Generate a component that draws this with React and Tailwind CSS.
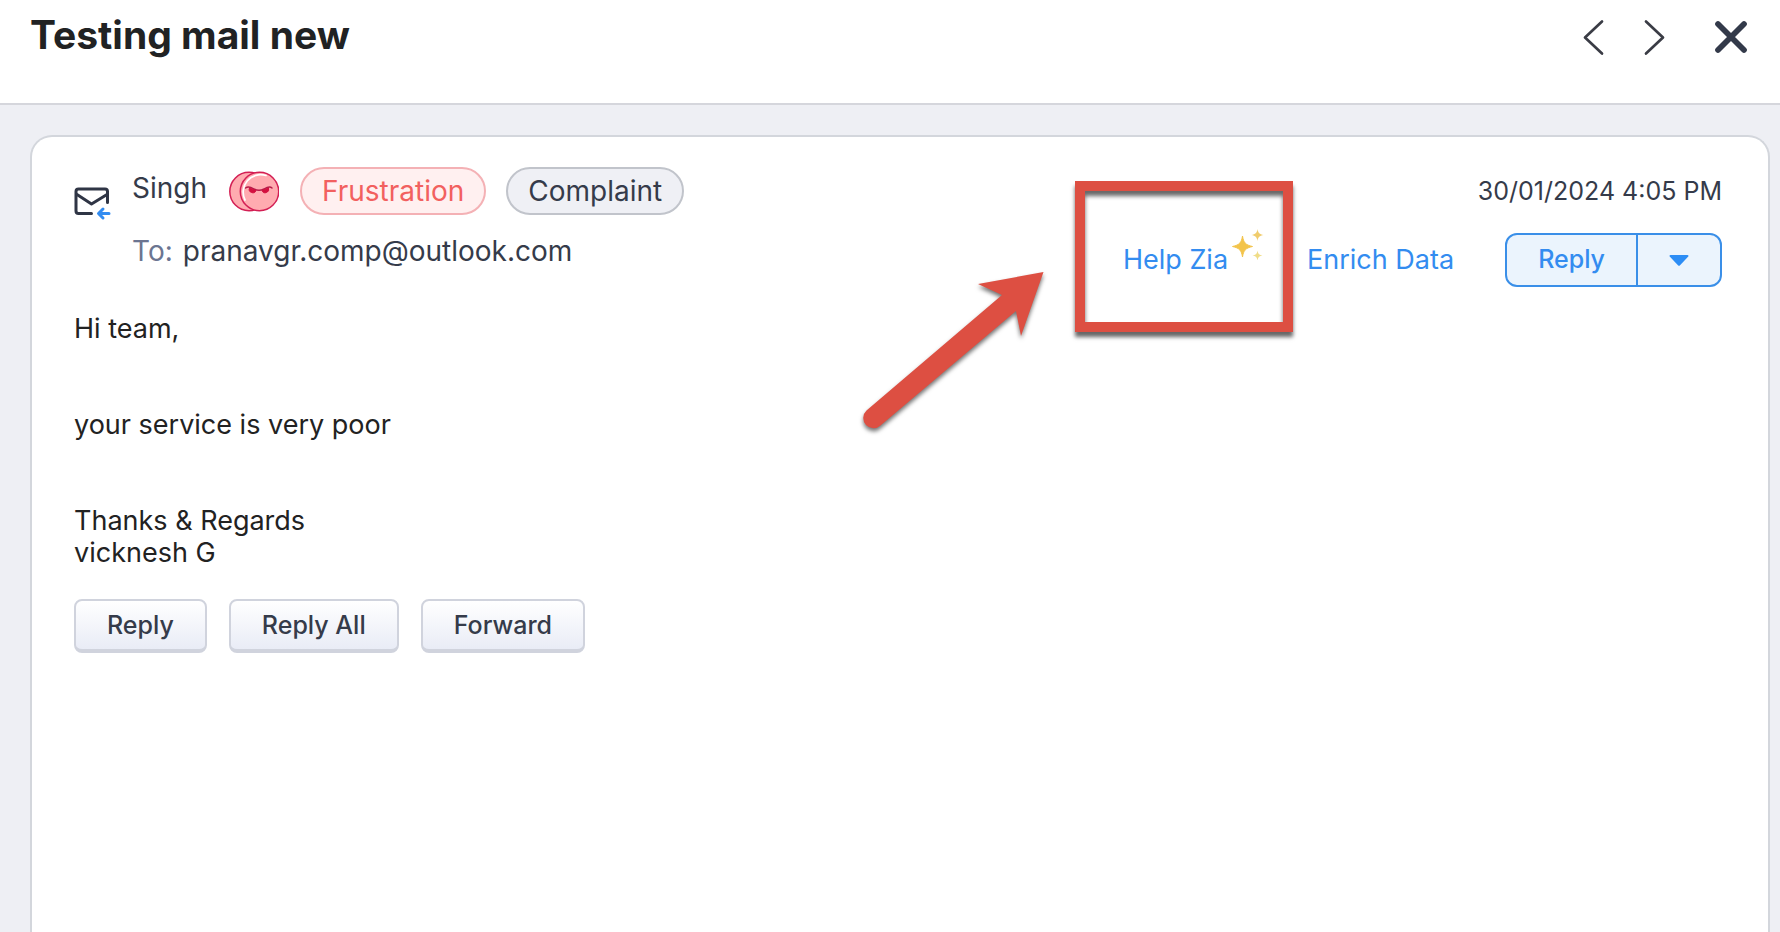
import { useState } from "react";

const mail = {
  subject: "Testing mail new",
  from: "Singh",
  to: "pranavgr.comp@outlook.com",
  date: "30/01/2024 4:05 PM",
  lines: ["Hi team,", "", "", "your service is very poor", "", "", "Thanks & Regards", "vicknesh G"],
};

function MailIcon() {
  return (
    <svg width="38" height="34" viewBox="0 0 38 34" fill="none" strokeLinecap="round" strokeLinejoin="round">
      <path d="M17.500 26.500H4.500a2.500 2.500 0 0 1-2.500-2.500V4.500A2.500 2.500 0 0 1 4.500 2h26.500a2.500 2.500 0 0 1 2.500 2.500V15.500" stroke="#2f3545" strokeWidth="3" />
      <path d="M3 7.500l14.500 9.500L33 7.500" stroke="#2f3545" strokeWidth="3" />
      <path d="M35 26.500H25M29 22l-4.500 4.500 4.500 4.500" stroke="#338cf0" strokeWidth="3" />
    </svg>
  );
}

function AngryFace() {
  return (
    <svg width="50" height="42" viewBox="0 0 50 42" fill="none">
      <circle cx="20" cy="20.500" r="19.200" fill="#ffabb0" stroke="#d31f54" strokeWidth="1.500" />
      <circle cx="30.500" cy="20.500" r="19.200" fill="#ffabb0" stroke="#d31f54" strokeWidth="1.500" />
      <path d="M16 29A17.500 17.500 0 0 1 37 4.500" stroke="#fff" strokeWidth="1.700" strokeLinecap="round" />
      <path d="M16.500 17c3-2.500 6-.5 8.500 1 3 1.500 7 1.500 10 0 2.500-1.500 5.500-3.500 8-1" stroke="#b51c4a" strokeWidth="1.400" strokeLinecap="round" />
      <path d="M20.500 17l6.500 2.500a3.300 3.300 0 1 1-6.500-2.500zM39.500 17L33 19.500a3.300 3.300 0 1 0 6.500-2.500z" fill="#d3103f" stroke="#d3103f" />
    </svg>
  );
}

function Sparkles() {
  return (
    <svg width="32" height="32" viewBox="0 0 32 32" className="-mt-8">
      <path d="M10.500 8c1 6.500 3 9 10 10.500-7 1.500-9 4-10 10.500-1-6.500-3-9-10-10.500 7-1.500 9-4 10-10.500z" fill="#f3c44b" stroke="#f3c44b" strokeLinejoin="round" />
      <path d="M25.500 1c.7 4 2 5.300 6 6-4 .7-5.300 2-6 6-.7-4-2-5.300-6-6 4-.7 5.300-2 6-6z" fill="#f0cc6c" />
      <path d="M25.500 22.500c.6 3.500 1.800 4.500 5 5-3.200.6-4.400 1.600-5 5-.6-3.400-1.800-4.400-5-5 3.200-.5 4.400-1.500 5-5z" fill="#f0dd88" />
    </svg>
  );
}

// red frame and arrow that lie over the Help Zia link
function Highlight() {
  return (
    <>
      <div className="pointer-events-none absolute -left-12 -top-[52px] h-[151px] w-[218px] border-[10px] border-[#dd4f42] shadow-[0_5px_4px_rgba(0,0,0,0.6),inset_0_5px_4px_rgba(0,0,0,0.6)]" />
      <svg
        className="pointer-events-none absolute -left-[263px] top-[33px] drop-shadow-[0_3px_2px_rgba(0,0,0,0.55)]"
        width="190"
        height="170"
        viewBox="0 0 190 170"
      >
        <path d="M183.500 6L118 18l24 11L6.500 144.500a10 10 0 0 0 14 15L156 45l5 25z" fill="#dd4f42" />
      </svg>
    </>
  );
}

function FooterButton({ children }) {
  return (
    <button className="h-[54px] rounded-lg border-2 border-b-4 border-[#d0d3dd] bg-linear-to-b from-white to-[#e9ecf6] px-[31px] text-[25px] font-medium leading-8 text-[#353b4a]">
      {children}
    </button>
  );
}

export default function App() {
  const [open, setOpen] = useState(false);

  return (
    <div className="flex min-h-screen flex-col bg-[#eeeff4] font-['Inter',sans-serif] text-[#353b4a]">
      <header className="flex h-[105px] items-start justify-between border-b-2 border-[#d5d6dc] bg-white pl-[30px] pr-8">
        <h1 className="pt-3 text-[39px] font-bold leading-[46px] text-[#212223]">{mail.subject}</h1>
        <div className="flex items-center pt-[18px]">
          <button aria-label="Previous" className="mr-[38px]">
            <svg width="23" height="38" viewBox="0 0 23 38" fill="none" stroke="#3a3c45" strokeWidth="2.700" strokeLinecap="round" strokeLinejoin="round">
              <path d="M20 3.500L3 19.500l17 16" />
            </svg>
          </button>
          <button aria-label="Next" className="mr-12">
            <svg width="23" height="38" viewBox="0 0 23 38" fill="none" stroke="#3a3c45" strokeWidth="2.700" strokeLinecap="round" strokeLinejoin="round">
              <path d="M3 3.500l17 16-17 16" />
            </svg>
          </button>
          <button aria-label="Close">
            <svg width="34" height="34" viewBox="0 0 34 34" fill="none" stroke="#333a4a" strokeWidth="5.700" strokeLinecap="round">
              <path d="M4 4l26 26M30 4L4 30" />
            </svg>
          </button>
        </div>
      </header>

      <main className="ml-[30px] mr-2.5 mt-[30px] flex-1 rounded-t-[22px] border-2 border-b-0 border-[#d3d6dc] bg-white pl-[42px] pr-[46px] pt-[30px]">
        <div className="flex items-start justify-between">
          <div className="flex items-start">
            <div className="mt-5 w-[58px]">
              <MailIcon />
            </div>
            <div>
              <div className="flex items-start">
                <span className="mr-[22px] text-[28px] leading-[42px]">{mail.from}</span>
                <span className="mr-[21px] mt-1">
                  <AngryFace />
                </span>
                <span className="mr-5 flex h-12 items-center rounded-full border-2 border-[#f4b1b5] bg-[#fff0f0] px-5 text-[28px] text-[#f2605f]">
                  Frustration
                </span>
                <span className="flex h-12 items-center rounded-full border-2 border-[#c1c4cb] bg-[#eff0f5] px-5 text-[28px]">
                  Complaint
                </span>
              </div>
              <p className="mt-5 text-[28px] leading-8">
                <span className="mr-2.5 text-[#6b7591]">To:</span>
                {mail.to}
              </p>
            </div>
          </div>

          <div className="flex flex-col items-end">
            <time className="text-[25px] leading-[48px]">{mail.date}</time>
            <div className="mt-[18px] flex items-center text-[#338cf0]">
              <div className="relative mr-[43px] h-[54px]">
                <a href="#zia" className="flex h-full items-center gap-1 text-[27px]">
                  Help Zia
                  <Sparkles />
                </a>
                <Highlight />
              </div>
              <a href="#enrich" className="mr-[51px] text-[27px]">
                Enrich Data
              </a>
              <div className="flex h-[54px] rounded-xl border-2 border-[#3a8fe8] bg-[#ebf4fd]">
                <button className="border-r-2 border-[#3a8fe8] px-[31px] text-[25px] font-medium">Reply</button>
                <button aria-label="More reply options" aria-expanded={open} onClick={() => setOpen(!open)} className="flex w-[82px] items-center justify-center">
                  <svg width="20" height="11" viewBox="0 0 20 11" fill="#2c8df5">
                    <path d="M1.500 0h17a1 1 0 0 1 .8 1.600l-8.500 8.800a1.200 1.200 0 0 1-1.600 0L.7 1.600A1 1 0 0 1 1.500 0z" />
                  </svg>
                </button>
              </div>
            </div>
          </div>
        </div>

        <div className="mt-[26px] text-[27px] leading-8 text-[#222]">
          {mail.lines.map((line, i) => (
            <p key={i} className="min-h-8">
              {line}
            </p>
          ))}
        </div>

        <div className="mt-[30px] flex gap-[22px]">
          <FooterButton>Reply</FooterButton>
          <FooterButton>Reply All</FooterButton>
          <FooterButton>Forward</FooterButton>
        </div>
      </main>
    </div>
  );
}
